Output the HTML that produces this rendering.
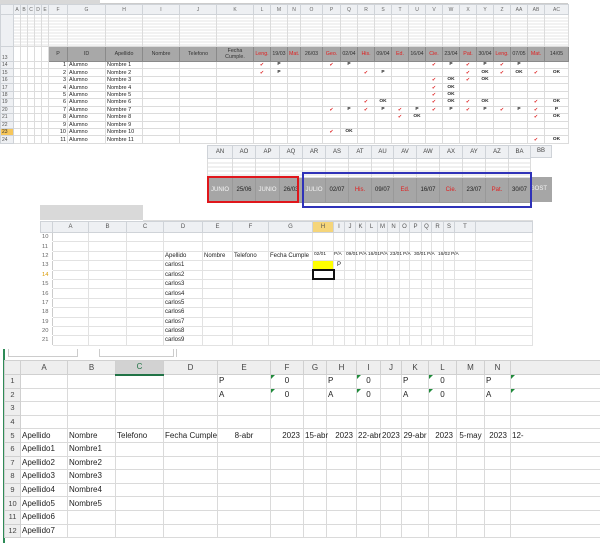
<!DOCTYPE html>
<html><head><meta charset="utf-8">
<style>
*{margin:0;padding:0;box-sizing:border-box}
body{width:600px;height:543px;background:#fff;position:relative;overflow:hidden;font-family:"Liberation Sans","DejaVu Sans",sans-serif;color:#222}
.abs{position:absolute}
table{border-collapse:collapse;table-layout:fixed}
td{border:1px solid #dcdcdc;padding:0 1px;white-space:nowrap;overflow:visible;vertical-align:middle}
#p1{left:0;top:4px;width:568px;font-size:5.5px}
#p1 .h td{height:10px;background:#eef0f3;color:#666;text-align:center;border-color:#cfd3d8;font-size:5px}
#p1 .thin td{height:32px;background:repeating-linear-gradient(to bottom,#fff 0 2px,#e4e4e4 2px 3px)}
#p1 .g td.gy{background:#a8a8a8;color:#333;text-align:center;height:15px;border-color:#8a8a8a;font-size:5.3px}
#p1 .d td{height:7.45px;line-height:6px}
#p1 td.rn{background:#eef0f3;color:#555;font-size:5px;border-color:#cfd3d8}
#p1 td.r{text-align:right}
#p1 td.c{color:#d22;text-align:center;font-size:5px}
#p1 td.k{text-align:center;font-weight:bold;font-size:4.8px}
.red{color:#e02020!important}
#p2{left:205px;top:145px;width:350px;height:62px;background:#fff}
#t2{position:absolute;left:2px;top:0;width:323px;font-size:6px}
#t2 .h td{height:13px;background:#eef0f3;color:#444;text-align:center;border-color:#cfd3d8}
#t2 .thin td{height:19px;background:repeating-linear-gradient(to bottom,#fff 0 3px,#e0e0e0 3px 4px)}
#t2 .g td{height:25px;background:#a6a6a6;text-align:center;color:#222;border-color:#999}
#t2 .g td.w{color:#f4f4f4}
#p3top{left:40px;top:205px;width:103px;height:15px;background:#d9d9d9}
#t3{left:40px;top:221px;width:482px;font-size:6px}
#t3 .h td{height:11px;background:#eef0f3;color:#555;text-align:center;border-color:#cfd3d8}
#t3 td{height:9.4px;border-color:#e2e2e2;line-height:8px}
#t3 td.rn{background:#fff;color:#666;border-color:#fff;border-right-color:#ccc;font-size:5.8px}
.s3{position:absolute;top:252px;font-size:4.8px;color:#222}
#t4{left:4px;top:360px;width:596px;font-size:8px;color:#222}
#t4 .h td{height:14px;background:#eeeeee;color:#444;text-align:center;border-color:#d0d0d0}
#t4 td{height:13.6px;border-color:#dadada;line-height:12px}
#t4 td.rn{background:#eeeeee;text-align:center;color:#444;border-color:#d0d0d0;font-size:7.5px}
#t4 td.r{text-align:right;padding-right:3px}
#t4 td.ce{text-align:center}
.tri{position:relative}
.tri:before{content:"";position:absolute;left:0;top:0;border-top:4px solid #1f8a3a;border-right:4px solid transparent}
</style></head><body>

<div class="abs" style="left:0;top:0;width:100px;height:4px;background:#d8d8d8"></div>
<div class="abs" style="left:100px;top:0;width:468px;height:4px;border-bottom:1px solid #ccc"></div>
<table class="abs" id="p1">
<colgroup><col style="width:13px"><col style="width:7px"><col style="width:7px"><col style="width:7px"><col style="width:7px"><col style="width:7px"><col style="width:19px"><col style="width:38px"><col style="width:37px"><col style="width:37px"><col style="width:37px"><col style="width:37px"><col style="width:17px"><col style="width:17px"><col style="width:13px"><col style="width:22px"><col style="width:18px"><col style="width:17px"><col style="width:17px"><col style="width:17px"><col style="width:17px"><col style="width:17px"><col style="width:17px"><col style="width:17px"><col style="width:17px"><col style="width:17px"><col style="width:17px"><col style="width:17px"><col style="width:17px"><col style="width:24px"></colgroup>
<tr class="h"><td></td><td>A</td><td>B</td><td>C</td><td>D</td><td>E</td><td>F</td><td>G</td><td>H</td><td>I</td><td>J</td><td>K</td><td>L</td><td>M</td><td>N</td><td>O</td><td>P</td><td>Q</td><td>R</td><td>S</td><td>T</td><td>U</td><td>V</td><td>W</td><td>X</td><td>Y</td><td>Z</td><td>AA</td><td>AB</td><td>AC</td></tr>
<tr class="thin"><td class="rn"></td><td></td><td></td><td></td><td></td><td></td><td></td><td></td><td></td><td></td><td></td><td></td><td></td><td></td><td></td><td></td><td></td><td></td><td></td><td></td><td></td><td></td><td></td><td></td><td></td><td></td><td></td><td></td><td></td><td></td></tr>
<tr class="g"><td class="rn" style="height:15px;vertical-align:bottom">13</td><td></td><td></td><td></td><td></td><td></td><td class="gy">P</td><td class="gy">ID</td><td class="gy">Apellido</td><td class="gy">Nombre</td><td class="gy">Telefono</td><td class="gy">Fecha<br>Cumple.</td><td class="gy red">Leng.</td><td class="gy">19/03</td><td class="gy red">Mat.</td><td class="gy">26/03</td><td class="gy red">Geo.</td><td class="gy">02/04</td><td class="gy red">His.</td><td class="gy">09/04</td><td class="gy red">Ed.</td><td class="gy">16/04</td><td class="gy red">Cie.</td><td class="gy">23/04</td><td class="gy red">Pat.</td><td class="gy">30/04</td><td class="gy red">Leng.</td><td class="gy">07/05</td><td class="gy red">Mat.</td><td class="gy">14/05</td></tr>
<tr class="d"><td class="rn">14</td><td></td><td></td><td></td><td></td><td></td><td class="r">1</td><td>Alumno</td><td>Nombre 1</td><td></td><td></td><td></td><td class="c">✔</td><td class="k">P</td><td></td><td></td><td class="c">✔</td><td class="k">P</td><td></td><td></td><td></td><td></td><td class="c">✔</td><td class="k">P</td><td class="c">✔</td><td class="k">P</td><td class="c">✔</td><td class="k">P</td><td></td><td></td></tr>
<tr class="d"><td class="rn">15</td><td></td><td></td><td></td><td></td><td></td><td class="r">2</td><td>Alumno</td><td>Nombre 2</td><td></td><td></td><td></td><td class="c">✔</td><td class="k">P</td><td></td><td></td><td></td><td></td><td class="c">✔</td><td class="k">P</td><td></td><td></td><td></td><td></td><td class="c">✔</td><td class="k">OK</td><td class="c">✔</td><td class="k">OK</td><td class="c">✔</td><td class="k">OK</td></tr>
<tr class="d"><td class="rn">16</td><td></td><td></td><td></td><td></td><td></td><td class="r">3</td><td>Alumno</td><td>Nombre 3</td><td></td><td></td><td></td><td></td><td></td><td></td><td></td><td></td><td></td><td></td><td></td><td></td><td></td><td class="c">✔</td><td class="k">OK</td><td class="c">✔</td><td class="k">OK</td><td></td><td></td><td></td><td></td></tr>
<tr class="d"><td class="rn">17</td><td></td><td></td><td></td><td></td><td></td><td class="r">4</td><td>Alumno</td><td>Nombre 4</td><td></td><td></td><td></td><td></td><td></td><td></td><td></td><td></td><td></td><td></td><td></td><td></td><td></td><td class="c">✔</td><td class="k">OK</td><td></td><td></td><td></td><td></td><td></td><td></td></tr>
<tr class="d"><td class="rn">18</td><td></td><td></td><td></td><td></td><td></td><td class="r">5</td><td>Alumno</td><td>Nombre 5</td><td></td><td></td><td></td><td></td><td></td><td></td><td></td><td></td><td></td><td></td><td></td><td></td><td></td><td class="c">✔</td><td class="k">OK</td><td></td><td></td><td></td><td></td><td></td><td></td></tr>
<tr class="d"><td class="rn">19</td><td></td><td></td><td></td><td></td><td></td><td class="r">6</td><td>Alumno</td><td>Nombre 6</td><td></td><td></td><td></td><td></td><td></td><td></td><td></td><td></td><td></td><td class="c">✔</td><td class="k">OK</td><td></td><td></td><td class="c">✔</td><td class="k">OK</td><td class="c">✔</td><td class="k">OK</td><td></td><td></td><td class="c">✔</td><td class="k">OK</td></tr>
<tr class="d"><td class="rn">20</td><td></td><td></td><td></td><td></td><td></td><td class="r">7</td><td>Alumno</td><td>Nombre 7</td><td></td><td></td><td></td><td></td><td></td><td></td><td></td><td class="c">✔</td><td class="k">P</td><td class="c">✔</td><td class="k">P</td><td class="c">✔</td><td class="k">P</td><td class="c">✔</td><td class="k">P</td><td class="c">✔</td><td class="k">P</td><td class="c">✔</td><td class="k">P</td><td class="c">✔</td><td class="k">P</td></tr>
<tr class="d"><td class="rn">21</td><td></td><td></td><td></td><td></td><td></td><td class="r">8</td><td>Alumno</td><td>Nombre 8</td><td></td><td></td><td></td><td></td><td></td><td></td><td></td><td></td><td></td><td></td><td></td><td class="c">✔</td><td class="k">OK</td><td></td><td></td><td></td><td></td><td></td><td></td><td class="c">✔</td><td class="k">OK</td></tr>
<tr class="d"><td class="rn">22</td><td></td><td></td><td></td><td></td><td></td><td class="r">9</td><td>Alumno</td><td>Nombre 9</td><td></td><td></td><td></td><td></td><td></td><td></td><td></td><td></td><td></td><td></td><td></td><td></td><td></td><td></td><td></td><td></td><td></td><td></td><td></td><td></td><td></td></tr>
<tr class="d"><td class="rn" style="background:#f6c65a;color:#333">23</td><td></td><td></td><td></td><td></td><td></td><td class="r">10</td><td>Alumno</td><td>Nombre 10</td><td></td><td></td><td></td><td></td><td></td><td></td><td></td><td class="c">✔</td><td class="k">OK</td><td></td><td></td><td></td><td></td><td></td><td></td><td></td><td></td><td></td><td></td><td></td><td></td></tr>
<tr class="d"><td class="rn">24</td><td></td><td></td><td></td><td></td><td></td><td class="r">11</td><td>Alumno</td><td>Nombre 11</td><td></td><td></td><td></td><td></td><td></td><td></td><td></td><td></td><td></td><td></td><td></td><td></td><td></td><td></td><td></td><td></td><td></td><td></td><td></td><td class="c">✔</td><td class="k">OK</td></tr>
</table>

<div class="abs" id="p2">
<table id="t2">
<colgroup><col style="width:25px"><col style="width:23px"><col style="width:24px"><col style="width:23px"><col style="width:23px"><col style="width:23px"><col style="width:23px"><col style="width:22px"><col style="width:23px"><col style="width:23px"><col style="width:23px"><col style="width:23px"><col style="width:23px"><col style="width:22px"></colgroup>
<tr class="h"><td>AN</td><td>AO</td><td>AP</td><td>AQ</td><td>AR</td><td>AS</td><td>AT</td><td>AU</td><td>AV</td><td>AW</td><td>AX</td><td>AY</td><td>AZ</td><td>BA</td></tr>
<tr class="thin"><td></td><td></td><td></td><td></td><td></td><td></td><td></td><td></td><td></td><td></td><td></td><td></td><td></td><td></td></tr>
<tr class="g"><td class="w">JUNIO</td><td>25/06</td><td class="w">JUNIO</td><td>26/03</td><td class="w">JULIO</td><td>02/07</td><td class="red">His.</td><td>09/07</td><td class="red">Ed.</td><td>16/07</td><td class="red">Cie.</td><td>23/07</td><td class="red">Pat.</td><td>30/07</td></tr>
</table>
<div class="abs" style="left:325px;top:0;width:22px;height:13px;background:#eef0f3;border:1px solid #cfd3d8;font-size:6px;text-align:center;line-height:11px;color:#444">BB</div>
<div class="abs" style="left:325px;top:32px;width:22px;height:25px;background:#a6a6a6;color:#f4f4f4;font-size:6px;line-height:25px;overflow:hidden">GOST</div>
</div>
<div class="abs" style="left:207px;top:176px;width:92px;height:27px;border:2px solid #e0161b"></div>
<div class="abs" style="left:302px;top:172px;width:230px;height:36px;border:2px solid #2f32b8"></div>

<div class="abs" id="p3top"></div>
<div class="abs" style="left:143px;top:218px;width:390px;height:3px;border-bottom:1px solid #ddd"></div>
<table class="abs" id="t3">
<colgroup><col style="width:12px"><col style="width:36px"><col style="width:38px"><col style="width:37px"><col style="width:39px"><col style="width:30px"><col style="width:36px"><col style="width:44px"><col style="width:21px"><col style="width:11px"><col style="width:11px"><col style="width:10px"><col style="width:12px"><col style="width:10px"><col style="width:12px"><col style="width:10px"><col style="width:12px"><col style="width:10px"><col style="width:12px"><col style="width:11px"><col style="width:21px"><col style="width:57px"></colgroup>
<tr class="h"><td></td><td>A</td><td>B</td><td>C</td><td>D</td><td>E</td><td>F</td><td>G</td><td style="background:#f5d57a">H</td><td>I</td><td>J</td><td>K</td><td>L</td><td>M</td><td>N</td><td>O</td><td>P</td><td>Q</td><td>R</td><td>S</td><td>T</td><td></td></tr>
<tr><td class="rn">10</td><td></td><td></td><td></td><td></td><td></td><td></td><td></td><td></td><td></td><td></td><td></td><td></td><td></td><td></td><td></td><td></td><td></td><td></td><td></td><td></td><td></td></tr>
<tr><td class="rn">11</td><td></td><td></td><td></td><td></td><td></td><td></td><td></td><td></td><td></td><td></td><td></td><td></td><td></td><td></td><td></td><td></td><td></td><td></td><td></td><td></td><td></td></tr>
<tr><td class="rn">12</td><td></td><td></td><td></td><td>Apellido</td><td>Nombre</td><td>Telefono</td><td>Fecha Cumple</td><td></td><td></td><td></td><td></td><td></td><td></td><td></td><td></td><td></td><td></td><td></td><td></td><td></td><td></td></tr>
<tr><td class="rn">13</td><td></td><td></td><td></td><td>carlos1</td><td></td><td></td><td></td><td style="background:#ffff00"></td><td style="text-align:center">P</td><td></td><td></td><td></td><td></td><td></td><td></td><td></td><td></td><td></td><td></td><td></td><td></td></tr>
<tr><td class="rn" style="color:#d99a00">14</td><td></td><td></td><td></td><td>carlos2</td><td></td><td></td><td></td><td style="border:2px solid #111"></td><td></td><td></td><td></td><td></td><td></td><td></td><td></td><td></td><td></td><td></td><td></td><td></td><td></td></tr>
<tr><td class="rn">15</td><td></td><td></td><td></td><td>carlos3</td><td></td><td></td><td></td><td></td><td></td><td></td><td></td><td></td><td></td><td></td><td></td><td></td><td></td><td></td><td></td><td></td><td></td></tr>
<tr><td class="rn">16</td><td></td><td></td><td></td><td>carlos4</td><td></td><td></td><td></td><td></td><td></td><td></td><td></td><td></td><td></td><td></td><td></td><td></td><td></td><td></td><td></td><td></td><td></td></tr>
<tr><td class="rn">17</td><td></td><td></td><td></td><td>carlos5</td><td></td><td></td><td></td><td></td><td></td><td></td><td></td><td></td><td></td><td></td><td></td><td></td><td></td><td></td><td></td><td></td><td></td></tr>
<tr><td class="rn">18</td><td></td><td></td><td></td><td>carlos6</td><td></td><td></td><td></td><td></td><td></td><td></td><td></td><td></td><td></td><td></td><td></td><td></td><td></td><td></td><td></td><td></td><td></td></tr>
<tr><td class="rn">19</td><td></td><td></td><td></td><td>carlos7</td><td></td><td></td><td></td><td></td><td></td><td></td><td></td><td></td><td></td><td></td><td></td><td></td><td></td><td></td><td></td><td></td><td></td></tr>
<tr><td class="rn">20</td><td></td><td></td><td></td><td>carlos8</td><td></td><td></td><td></td><td></td><td></td><td></td><td></td><td></td><td></td><td></td><td></td><td></td><td></td><td></td><td></td><td></td><td></td></tr>
<tr><td class="rn">21</td><td></td><td></td><td></td><td>carlos9</td><td></td><td></td><td></td><td></td><td></td><td></td><td></td><td></td><td></td><td></td><td></td><td></td><td></td><td></td><td></td><td></td><td></td></tr>
</table>
<span class="s3" style="left:314px">02/01</span><span class="s3" style="left:334px">P/A</span>
<span class="s3" style="left:346px">09/01</span><span class="s3" style="left:359px">P/A</span>
<span class="s3" style="left:368px">16/01</span><span class="s3" style="left:380px">P/A</span>
<span class="s3" style="left:390px">23/01</span><span class="s3" style="left:403px">P/A</span>
<span class="s3" style="left:414px">30/01</span><span class="s3" style="left:427px">P/A</span>
<span class="s3" style="left:438px">16/02</span><span class="s3" style="left:451px">P/A</span>

<div class="abs" style="left:3px;top:349px;width:2px;height:194px;background:#2e8b57"></div>
<div class="abs" style="left:8px;top:349px;width:70px;height:8px;border:1px solid #ccc;border-top:none"></div>
<div class="abs" style="left:99px;top:349px;width:75px;height:8px;border:1px solid #ccc;border-top:none"></div>
<div class="abs" style="left:176px;top:349px;width:424px;height:8px;border-left:1px solid #ccc"></div>
<table class="abs" id="t4">
<colgroup><col style="width:16px"><col style="width:47px"><col style="width:48px"><col style="width:48px"><col style="width:54px"><col style="width:53px"><col style="width:33px"><col style="width:23px"><col style="width:30px"><col style="width:24px"><col style="width:21px"><col style="width:27px"><col style="width:28px"><col style="width:28px"><col style="width:26px"><col style="width:90px"></colgroup>
<tr class="h"><td></td><td>A</td><td>B</td><td style="background:#d2d2d2;border-bottom:2px solid #217346;color:#217346">C</td><td>D</td><td>E</td><td>F</td><td>G</td><td>H</td><td>I</td><td>J</td><td>K</td><td>L</td><td>M</td><td>N</td><td></td></tr>
<tr><td class="rn">1</td><td></td><td></td><td></td><td></td><td>P</td><td class="ce tri">0</td><td></td><td>P</td><td class="ce tri">0</td><td></td><td>P</td><td class="ce tri">0</td><td></td><td>P</td><td class="tri"></td></tr>
<tr><td class="rn">2</td><td></td><td></td><td></td><td></td><td>A</td><td class="ce tri">0</td><td></td><td>A</td><td class="ce tri">0</td><td></td><td>A</td><td class="ce tri">0</td><td></td><td>A</td><td class="tri"></td></tr>
<tr><td class="rn">3</td><td></td><td></td><td></td><td></td><td></td><td></td><td></td><td></td><td></td><td></td><td></td><td></td><td></td><td></td><td></td></tr>
<tr><td class="rn">4</td><td></td><td></td><td></td><td></td><td></td><td></td><td></td><td></td><td></td><td></td><td></td><td></td><td></td><td></td><td></td></tr>
<tr><td class="rn">5</td><td>Apellido</td><td>Nombre</td><td>Telefono</td><td>Fecha Cumple</td><td class="ce">8-abr</td><td class="r">2023</td><td class="ce">15-abr</td><td class="r">2023</td><td class="ce">22-abr</td><td class="r">2023</td><td class="ce">29-abr</td><td class="r">2023</td><td class="ce">5-may</td><td class="r">2023</td><td>12-</td></tr>
<tr><td class="rn">6</td><td>Apellido1</td><td>Nombre1</td><td></td><td></td><td></td><td></td><td></td><td></td><td></td><td></td><td></td><td></td><td></td><td></td><td></td></tr>
<tr><td class="rn">7</td><td>Apellido2</td><td>Nombre2</td><td></td><td></td><td></td><td></td><td></td><td></td><td></td><td></td><td></td><td></td><td></td><td></td><td></td></tr>
<tr><td class="rn">8</td><td>Apellido3</td><td>Nombre3</td><td></td><td></td><td></td><td></td><td></td><td></td><td></td><td></td><td></td><td></td><td></td><td></td><td></td></tr>
<tr><td class="rn">9</td><td>Apellido4</td><td>Nombre4</td><td></td><td></td><td></td><td></td><td></td><td></td><td></td><td></td><td></td><td></td><td></td><td></td><td></td></tr>
<tr><td class="rn">10</td><td>Apellido5</td><td>Nombre5</td><td></td><td></td><td></td><td></td><td></td><td></td><td></td><td></td><td></td><td></td><td></td><td></td><td></td></tr>
<tr><td class="rn">11</td><td>Apellido6</td><td></td><td></td><td></td><td></td><td></td><td></td><td></td><td></td><td></td><td></td><td></td><td></td><td></td><td></td></tr>
<tr><td class="rn">12</td><td>Apellido7</td><td></td><td></td><td></td><td></td><td></td><td></td><td></td><td></td><td></td><td></td><td></td><td></td><td></td><td></td></tr>
</table>
</body></html>
